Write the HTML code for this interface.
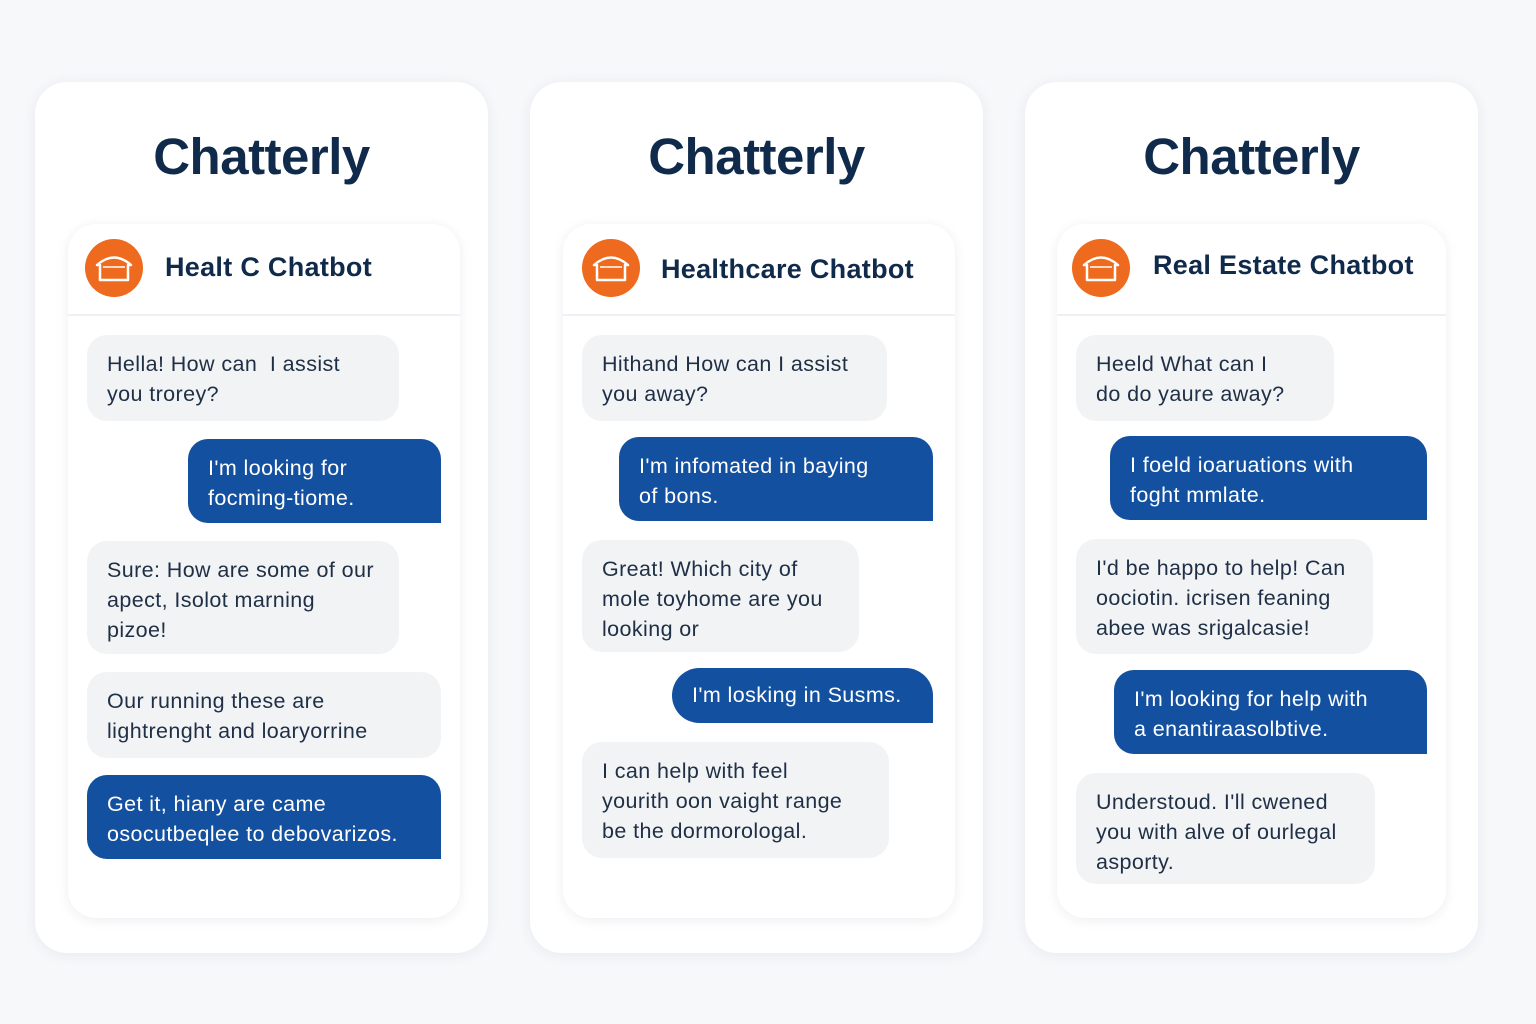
<!DOCTYPE html>
<html><head><meta charset="utf-8"><style>
*{margin:0;padding:0;box-sizing:border-box}
body{width:1536px;height:1024px;background:#f7f8fa;position:relative;overflow:hidden;font-family:"Liberation Sans",sans-serif}
.card{position:absolute;top:82px;width:453px;height:871px;background:#fff;border-radius:32px;box-shadow:0 2px 14px rgba(20,40,80,.07)}
.title{position:absolute;top:127px;width:453px;text-align:center;font-size:51px;font-weight:bold;color:#0f2a4a;letter-spacing:-.5px}
.panel{position:absolute;top:224px;height:694px;background:#fff;border-radius:28px;box-shadow:0 2px 12px rgba(20,40,80,.08)}
.hdr{position:absolute;left:0;right:0;top:90px;border-top:2px solid #eef0f3}
.hname{position:absolute;font-size:27px;font-weight:bold;color:#0f2a4a;letter-spacing:.3px}
.b{position:absolute;font-size:21.5px;letter-spacing:.4px;line-height:30px;padding:14px 20px;color:#1f2f45;background:#f1f3f5;border-radius:20px;white-space:nowrap}
.u{background:#1350a0;color:#fff;border-radius:20px 20px 0 20px}
</style></head><body>

<div class="card" style="left:35px"></div>
<div class="card" style="left:530px"></div>
<div class="card" style="left:1025px"></div>
<div class="title" style="left:35px">Chatterly</div>
<div class="title" style="left:530px">Chatterly</div>
<div class="title" style="left:1025px">Chatterly</div>

<div class="panel" style="left:68px;width:392px"><div class="hdr"></div></div>
<div class="panel" style="left:563px;width:392px"><div class="hdr"></div></div>
<div class="panel" style="left:1057px;width:389px"><div class="hdr"></div></div>

<svg style="position:absolute;left:0;top:0" width="1536" height="1024">
<defs><g id="h"><circle r="29" fill="#ee6a1e"/><path d="M-17 -3 Q0 -18 17 -3 L14 -3 L14 12 L-14 12 L-14 -3 Z" fill="none" stroke="#fff" stroke-width="2.5" stroke-linejoin="round"/><line x1="-11" y1="-1" x2="11" y2="-1" stroke="#fff" stroke-width="1.5"/></g></defs>
<use href="#h" x="114" y="268"/><use href="#h" x="611" y="268"/><use href="#h" x="1101" y="268"/>
</svg>
<div class="hname" style="left:165px;top:252px">Healt C Chatbot</div>
<div class="hname" style="left:661px;top:254px">Healthcare Chatbot</div>
<div class="hname" style="left:1153px;top:250px">Real Estate Chatbot</div>

<div class="b" style="left:87px;top:335px;width:312px;height:86px">Hella! How can &nbsp;I assist<br>you trorey?</div>
<div class="b u" style="left:188px;top:439px;width:253px;height:84px">I'm looking for<br>focming-tiome.</div>
<div class="b" style="left:87px;top:541px;width:312px;height:113px">Sure: How are some of our<br>apect, Isolot marning<br>pizoe!</div>
<div class="b" style="left:87px;top:672px;width:354px;height:86px">Our running these are<br>lightrenght and loaryorrine</div>
<div class="b u" style="left:87px;top:775px;width:354px;height:84px">Get it, hiany are came<br>osocutbeqlee to debovarizos.</div>

<div class="b" style="left:582px;top:335px;width:305px;height:86px">Hithand How can I assist<br>you away?</div>
<div class="b u" style="left:619px;top:437px;width:314px;height:84px">I'm infomated in baying<br>of bons.</div>
<div class="b" style="left:582px;top:540px;width:277px;height:112px">Great! Which city of<br>mole toyhome are you<br>looking or</div>
<div class="b u" style="left:672px;top:668px;width:261px;height:55px;padding-top:12px;border-radius:28px 28px 0 28px">I'm losking in Susms.</div>
<div class="b" style="left:582px;top:742px;width:307px;height:116px">I can help with feel<br>yourith oon vaight range<br>be the dormorologal.</div>

<div class="b" style="left:1076px;top:335px;width:258px;height:86px">Heeld What can I<br>do do yaure away?</div>
<div class="b u" style="left:1110px;top:436px;width:317px;height:84px">I foeld ioaruations with<br>foght mmlate.</div>
<div class="b" style="left:1076px;top:539px;width:297px;height:115px">I'd be happo to help! Can<br>oociotin. icrisen feaning<br>abee was srigalcasie!</div>
<div class="b u" style="left:1114px;top:670px;width:313px;height:84px">I'm looking for help with<br>a enantiraasolbtive.</div>
<div class="b" style="left:1076px;top:773px;width:299px;height:111px">Understoud. I'll cwened<br>you with alve of ourlegal<br>asporty.</div>
</body></html>
